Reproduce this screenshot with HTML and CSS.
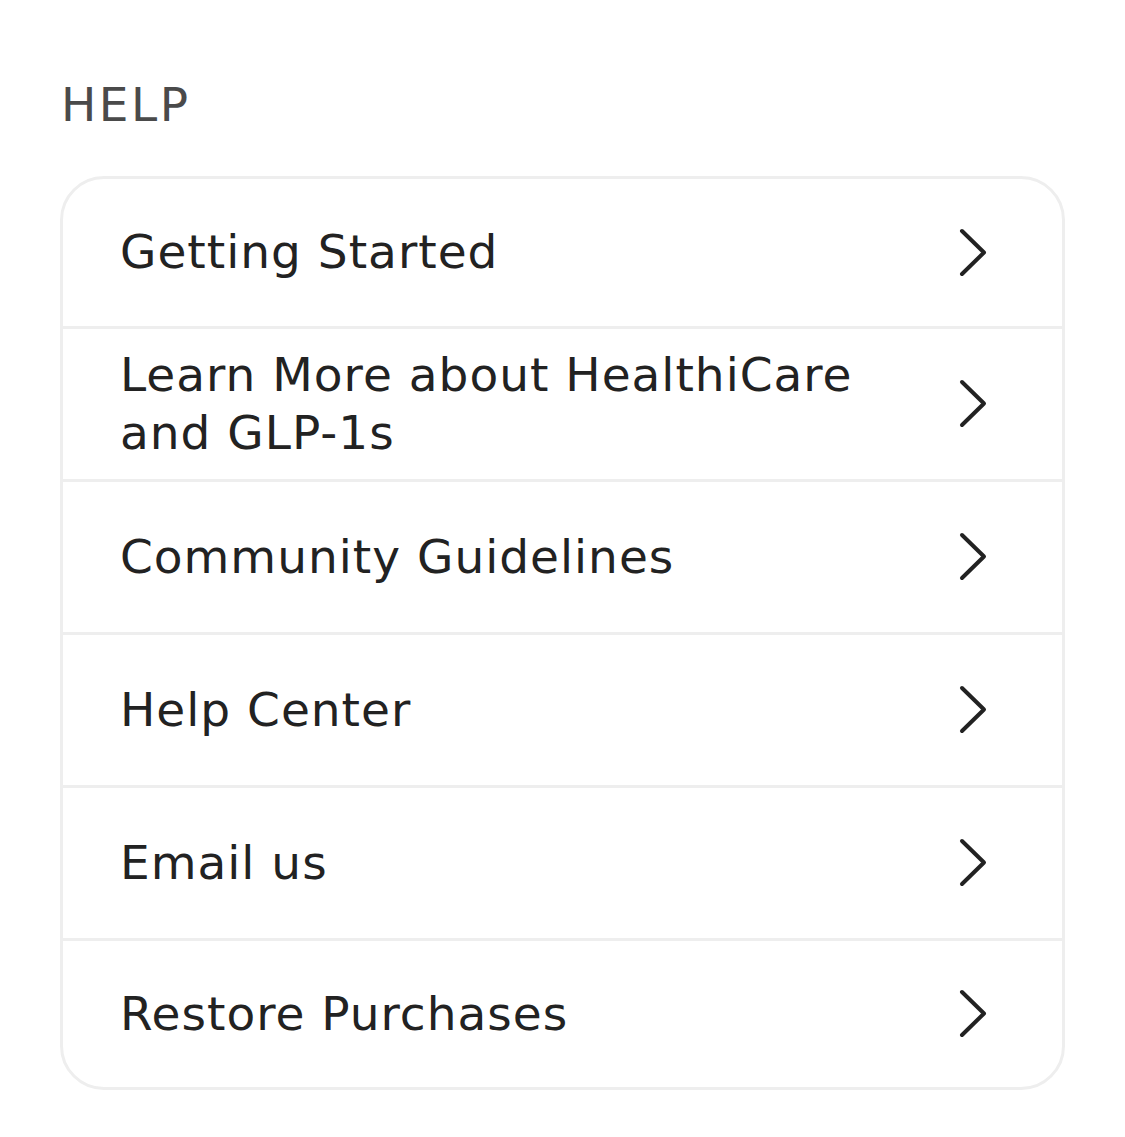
FILE: index.html
```html
<!DOCTYPE html>
<html>
  <head>
    <meta charset="UTF-8">
    <title>Help</title>
    <link rel="stylesheet" href="styles.css">
  </head>
  <body>
    <h2 class="section-title">HELP</h2>

    <ul class="menu">
      <li class="menu-item">
        <span class="menu-label">Getting Started</span>
        <svg class="chevron" viewBox="0 0 32 52"><path d="M4 4 L26 25.5 L4 47"/></svg>
      </li>
      <li class="menu-item">
        <span class="menu-label">Learn More about HealthiCare and GLP-1s</span>
        <svg class="chevron" viewBox="0 0 32 52"><path d="M4 4 L26 25.5 L4 47"/></svg>
      </li>
      <li class="menu-item">
        <span class="menu-label">Community Guidelines</span>
        <svg class="chevron" viewBox="0 0 32 52"><path d="M4 4 L26 25.5 L4 47"/></svg>
      </li>
      <li class="menu-item">
        <span class="menu-label">Help Center</span>
        <svg class="chevron" viewBox="0 0 32 52"><path d="M4 4 L26 25.5 L4 47"/></svg>
      </li>
      <li class="menu-item">
        <span class="menu-label">Email us</span>
        <svg class="chevron" viewBox="0 0 32 52"><path d="M4 4 L26 25.5 L4 47"/></svg>
      </li>
      <li class="menu-item">
        <span class="menu-label">Restore Purchases</span>
        <svg class="chevron" viewBox="0 0 32 52"><path d="M4 4 L26 25.5 L4 47"/></svg>
      </li>
    </ul>
  </body>
</html>
```

FILE: styles.css
```css
body {
  background-color: #fff;
  font-family: "DejaVu Sans", sans-serif;
  margin: 0;
  padding: 76px 60px 0;
}

.section-title {
  color: #4a4a4a;
  font-size: 47px;
  font-weight: normal;
  letter-spacing: 2.5px;
  line-height: 58px;
  margin: 0 0 42px 1px;
}

.menu {
  border: 3px solid #eeeeee;
  border-radius: 44px;
  list-style: none;
  margin: 0;
  padding: 0;
}

.menu-item {
  align-items: center;
  border-bottom: 3px solid #eeeeee;
  display: flex;
  height: 150px;
  padding: 0 72px 0 57px;
}

.menu-item:first-child {
  height: 147px;
}

.menu-item:last-child {
  border-bottom: none;
  height: 146px;
}

.menu-label {
  color: #222;
  flex: 1;
  font-size: 47px;
  letter-spacing: 1px;
  line-height: 58px;
  margin-top: -1px;
  max-width: 790px;
}

.chevron {
  fill: none;
  height: 52px;
  margin-left: auto;
  stroke: #222;
  stroke-linecap: round;
  stroke-linejoin: round;
  stroke-width: 4;
  width: 32px;
}
```
